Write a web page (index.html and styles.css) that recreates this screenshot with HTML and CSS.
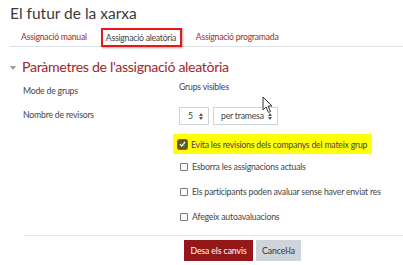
FILE: index.html
```html
<!DOCTYPE html>
<html lang="ca">
<head>
<meta charset="utf-8">
<link rel="stylesheet" href="styles.css">
</head>
<body>
<div class="page">
  <h1 class="title">El futur de la xarxa</h1>
  <nav class="tabs">
    <a class="tab">Assignació manual</a>
    <a class="tab active"><span class="hl-box">Assignació aleatòria</span></a>
    <a class="tab">Assignació programada</a>
  </nav>
  <h2 class="section"><span class="caret"></span>Paràmetres de l'assignació aleatòria</h2>
  <div class="form">
    <div class="row row-mode">
      <div class="label">Mode de grups</div>
      <div class="field static">Grups visibles</div>
    </div>
    <div class="row row-sel">
      <div class="label">Nombre de revisors</div>
      <div class="field selects">
        <div class="select s1">5<span class="arr"></span></div>
        <div class="select s2">per tramesa<span class="arr"></span></div>
        <svg class="cursor" width="12" height="18" viewBox="0 0 12 18"><path d="M1 1 L1 14 L4 11 L6.5 16.5 L8.5 15.5 L6 10 L10 10 Z" fill="#fff" stroke="#333" stroke-width="1"/></svg>
      </div>
    </div>
    <div class="checks">
      <label class="check yellow"><span class="cb on"><svg width="8" height="8" viewBox="0 0 8 8"><path d="M1 4.2 L3.2 6.3 L7 1.5" fill="none" stroke="#fff" stroke-width="1.4"/></svg></span>Evita les revisions dels companys del mateix grup</label>
      <label class="check"><span class="cb"></span>Esborra les assignacions actuals</label>
      <label class="check"><span class="cb"></span>Els participants poden avaluar sense haver enviat res</label>
      <label class="check"><span class="cb"></span>Afegeix autoavaluacions</label>
    </div>
    <div class="actions">
      <button class="btn primary">Desa els canvis</button>
      <button class="btn secondary">Cancel·la</button>
    </div>
  </div>
</div>
</body>
</html>
```
FILE: styles.css
```css
html, body {
  margin: 0;
  padding: 0;
  background: #fff;
}
body {
  font-family: Lato, "Noto Sans", sans-serif;
  color: #373a3c;
  width: 403px;
  height: 265px;
  overflow: hidden;
}
.page {
  padding: 0 0 0 10px;
}
.title {
  margin: 0;
  padding-top: 1px;
  height: 24px;
  font-size: 15.5px;
  font-weight: 400;
  line-height: 24px;
  color: #3a3a3a;
}
.tabs {
  display: flex;
  margin-top: 3px;
  border-bottom: 1px solid #dee2e6;
  height: 18px;
}
.tab {
  font-size: 8.7px;
  letter-spacing: -0.25px;
  color: #a52a2a;
  line-height: 18px;
  padding: 0 11px;
  white-space: nowrap;
}
.tab:first-child { margin-right: 3px; }
.tab.active {
  color: #444;
  padding: 0;
  margin-right: 3px;
}
.hl-box {
  display: block;
  box-sizing: border-box;
  width: 81px;
  border: 2px solid #e21a1a;
  box-shadow: 1px 1px 2px rgba(0,0,0,0.35);
  height: 19px;
  line-height: 15px;
  padding: 0 0 0 3px;
  background: #fff;
}
.section {
  margin: 10px 0 0 0;
  height: 20px;
  font-size: 14.2px;
  letter-spacing: -0.35px;
  font-weight: 400;
  color: #a3262b;
  line-height: 20px;
  display: flex;
  align-items: center;
  white-space: nowrap;
}
.caret {
  width: 0;
  height: 0;
  border-left: 3.5px solid transparent;
  border-right: 3.5px solid transparent;
  border-top: 4px solid #999;
  margin: 2px 6px 0 0;
}
.form {
  font-size: 8.7px;
  letter-spacing: -0.2px;
  color: #444;
}
.row {
  display: flex;
}
.label {
  width: 156px;
  padding-left: 13px;
  line-height: 12px;
}
.field { line-height: 12px; }
.row-mode {
  margin-top: 4px;
  height: 22px;
}
.row-mode .label { padding-top: 4px; }
.row-sel {
  height: 22px;
}
.row-sel .label { padding-top: 6px; }
.selects {
  display: flex;
  gap: 4px;
  position: relative;
  padding-top: 4px;
}
.select {
  box-sizing: border-box;
  height: 18px;
  border: 1px solid #ced4da;
  padding: 0 5px 0 8px;
  display: flex;
  align-items: center;
  justify-content: space-between;
  color: #444;
  white-space: nowrap;
}
.s1 { width: 30px; }
.s2 { width: 65px; padding-left: 7px; }
.arr {
  width: 4px;
  height: 7px;
  position: relative;
  display: block;
}
.arr::before, .arr::after {
  content: "";
  position: absolute;
  left: 0;
  border-left: 2px solid transparent;
  border-right: 2px solid transparent;
}
.arr::before { top: 0; border-bottom: 3px solid #555; }
.arr::after { bottom: 0; border-top: 3px solid #555; }
.cursor {
  position: absolute;
  left: 83px;
  top: -7px;
}
.checks {
  margin-left: 163px;
  margin-top: 9px;
  display: flex;
  flex-direction: column;
}
.check {
  display: flex;
  align-items: center;
  height: 25px;
  padding-left: 7px;
  white-space: nowrap;
}
.check.yellow {
  background: #ffff0a;
  height: 20px;
  width: 199px;
  box-sizing: border-box;
  padding-left: 4px;
  margin-bottom: 0;
}
.cb {
  width: 6px;
  height: 6px;
  border: 1px solid #777;
  border-radius: 1px;
  margin-right: 4px;
  background: #fff;
  display: flex;
  align-items: center;
  justify-content: center;
}
.cb.on {
  width: 7px;
  height: 7px;
  background: #2e7d1f;
  border: 1px solid #7a3d1e;
  outline: 1px solid #a05a2a;
  margin-left: 1px;
  margin-right: 4px;
}
.actions {
  margin-left: 13px;
  margin-top: 6px;
  border-top: 1px solid #e6e8eb;
  padding: 4px 0 0 161px;
  display: flex;
  gap: 3px;
}
.btn {
  font-family: inherit;
  font-size: 8.7px;
  letter-spacing: -0.1px;
  height: 21px;
  border: none;
  border-radius: 0;
  padding: 0;
}
.primary {
  width: 69px;
  background: #94181a;
  color: #fff;
}
.secondary {
  width: 45px;
  background: #ced4da;
  color: #333;
}
```
